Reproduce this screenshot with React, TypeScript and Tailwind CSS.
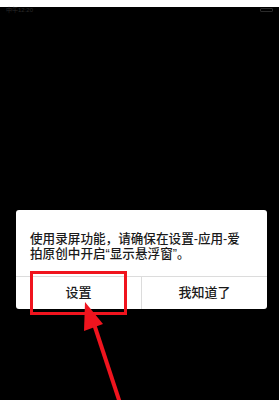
export default function App() {
  return (
    <main
      className="relative w-[279px] h-[400px] bg-black overflow-hidden"
      style={{ fontFamily: '"Liberation Sans", "Noto Sans CJK SC", sans-serif' }}
    >
      <div className="h-[7px] bg-white" />
      <div className="flex items-center justify-between px-[6px] h-[6px]">
        <span className="text-[6px] leading-[6px] text-[#2a2a2a]">中午12:20</span>
        <div className="w-[13px] h-[4px] border border-[#2a2a2a] rounded-[1px]" />
      </div>

      <section className="mt-[197px] ml-[16px] w-[251px] bg-white rounded-[3px]">
        <p className="pt-[22px] pb-[14px] px-[14px] text-[12.6px] leading-[15px] font-medium text-[#1a1a1a] whitespace-nowrap">
          使用录屏功能，请确保在设置-应用-爱
          <br />
          拍原创中开启“显示悬浮窗”。
        </p>
        <div className="flex h-[33px] border-t border-[#dcdcdc]">
          <button className="flex-1 text-[13px] font-medium text-[#1a1a1a] border-r border-[#dcdcdc]">
            设置
          </button>
          <button className="flex-1 text-[13px] font-medium text-[#1a1a1a]">我知道了</button>
        </div>
      </section>

      {/* annotation */}
      <div className="absolute left-[30px] top-[271px] w-[97px] h-[44px] border-[3px] border-[#f0141e]" />
      <svg className="absolute left-0 top-0" width="279" height="400" viewBox="0 0 279 400">
        <line x1="94" y1="324" x2="121" y2="406" stroke="#f0141e" strokeWidth="4" />
        <polygon points="85,302 103,324 84,331" fill="#f0141e" />
      </svg>
    </main>
  );
}
